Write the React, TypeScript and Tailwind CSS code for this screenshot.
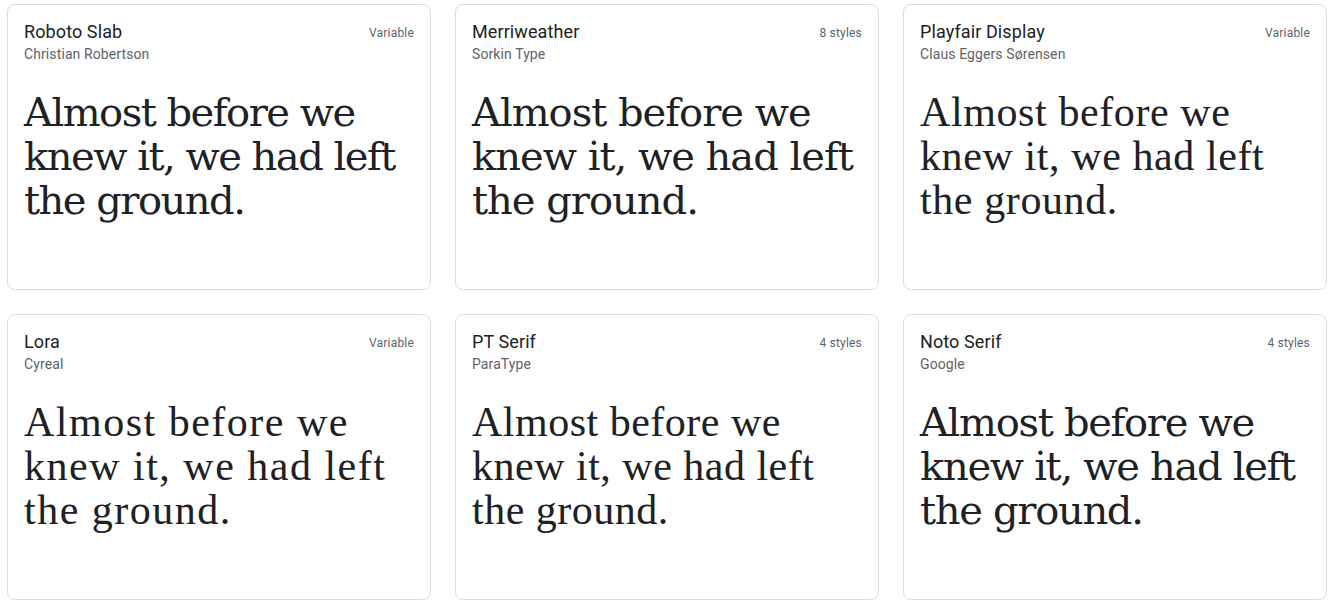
import React from "react";

type Card = {
  name: string;
  author: string;
  meta: string;
  fontClass: string;
};

const cards: Card[] = [
  { name: "Roboto Slab", author: "Christian Robertson", meta: "Variable", fontClass: "font-['DejaVu_Serif',serif] text-[40px] tracking-[-1.5px]" },
  { name: "Merriweather", author: "Sorkin Type", meta: "8 styles", fontClass: "font-['DejaVu_Serif',serif] text-[40px] tracking-[-1px]" },
  { name: "Playfair Display", author: "Claus Eggers Sørensen", meta: "Variable", fontClass: "font-['Liberation_Serif',serif] text-[42px] tracking-[0.6px]" },
  { name: "Lora", author: "Cyreal", meta: "Variable", fontClass: "font-['Liberation_Serif',serif] text-[42px] tracking-[1.5px]" },
  { name: "PT Serif", author: "ParaType", meta: "4 styles", fontClass: "font-['Liberation_Serif',serif] text-[42px] tracking-[0.5px]" },
  { name: "Noto Serif", author: "Google", meta: "4 styles", fontClass: "font-['DejaVu_Serif',serif] text-[40px] tracking-[-1.3px]" },
];

function FontCard({ c }: { c: Card }) {
  return (
    <div className="h-[286px] rounded-lg border border-[#dadce0] bg-white px-4 pt-[15px]">
      <div className="flex items-start justify-between">
        <div className="flex flex-col">
          <span className="font-['Roboto',sans-serif] text-[18px] leading-6 tracking-[0.1px] text-[#202124]">{c.name}</span>
          <span className="font-['Roboto',sans-serif] text-[14px] leading-5 tracking-[0.1px] text-[#5f6368]">{c.author}</span>
        </div>
        <span className="pt-[5px] font-['Roboto',sans-serif] text-[12px] leading-4 tracking-[0.2px] text-[#5f6368]">{c.meta}</span>
      </div>
      <p className={`mt-[26px] whitespace-nowrap leading-[44px] text-[#202124] ${c.fontClass}`}>
        <span className="block">Almost before we</span>
        <span className="block">knew it, we had left</span>
        <span className="block">the ground.</span>
      </p>
    </div>
  );
}

export default function App() {
  return (
    <div className="min-h-[605px] w-[1332px] bg-white pl-[7px] pt-[4px]">
      <div className="grid grid-cols-[424px_424px_424px] gap-6">
        {cards.map((c) => (
          <FontCard key={c.name} c={c} />
        ))}
      </div>
    </div>
  );
}
